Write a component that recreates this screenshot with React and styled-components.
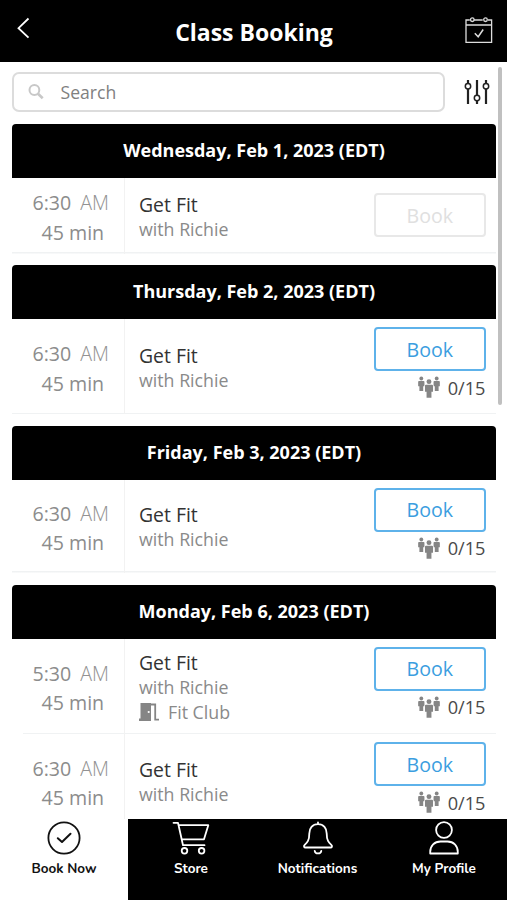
import React from "react";
import styled, { createGlobalStyle } from "styled-components";

const GlobalStyle = createGlobalStyle`
  * {
    box-sizing: border-box;
  }

  body {
    margin: 0;
    background: #fff;
    font-family: "Open Sans", "Noto Sans", sans-serif;
  }

  button {
    font-family: inherit;
  }
`;

const Screen = styled.div`
  position: relative;
  display: flex;
  flex-direction: column;
  height: 900px;
  width: 507px;
  overflow: hidden;
  background: #fff;
`;

const Header = styled.header`
  display: grid;
  grid-template-columns: 60px 1fr 60px;
  align-items: center;
  flex: 0 0 61.5px;
  background: #000;
  color: #fff;
`;

const Title = styled.h1`
  margin: 2px 0 0 1px;
  font-size: 23px;
  line-height: 30px;
  font-weight: 700;
  text-align: center;
`;

const BackIcon = styled.svg`
  margin: -5px 0 0 16px;
  width: 14px;
  height: 22px;
`;

const CalendarIcon = styled.svg`
  width: 28px;
  height: 28px;
  margin: -1px 0 0 18px;
`;

const Toolbar = styled.div`
  display: flex;
  align-items: center;
  flex: 0 0 62px;
  padding: 0 17px 1px 11.5px;
`;

const SearchBox = styled.div`
  display: flex;
  align-items: center;
  width: 433.5px;
  height: 40px;
  padding-left: 13px;
  border: 2px solid #dcdcdc;
  border-radius: 7px;
  color: #808080;
  font-size: 17.6px;
`;

const SearchIcon = styled.svg`
  width: 18px;
  height: 18px;
  margin-right: 16px;
`;

const FilterIcon = styled.svg`
  width: 26px;
  height: 26px;
  margin: -1px 0 0 auto;
`;

const List = styled.main`
  flex: 1 1 0;
  min-height: 0;
  overflow: hidden;
  padding: 0 11px 0 12px;
`;

const DayHeader = styled.h2`
  height: 54px;
  margin: 0;
  border-radius: 4px 4px 0 0;
  background: #000;
  color: #fff;
  font-size: 18px;
  line-height: 53px;
  font-weight: 700;
  text-align: center;
`;

const Day = styled.section`
  height: ${({ $height }) => $height}px;
`;

const Row = styled.div`
  display: grid;
  grid-template-columns: 113px 1fr 122px;
  height: ${({ $height }) => $height || 95}px;
  background: linear-gradient(#f0f2f3, #f0f2f3) no-repeat ${({ $inset }) => ($inset ? 11 : 0)}px 100% / 100% 1.5px;
`;

const Time = styled.div`
  display: flex;
  flex-direction: column;
  justify-content: center;
  padding: 4px 0 0 20.5px;
  border-right: 1px solid #f2f2f2;
  color: #8c8c8c;
  font-size: 19.6px;
  line-height: 29.5px;
  white-space: pre;
`;

const Period = styled.span`
  margin-left: 9px;
  color: #929292;
  font-weight: 300;
`;

const Duration = styled.div`
  padding-left: 9px;
`;

const Info = styled.div`
  display: flex;
  flex-direction: column;
  justify-content: center;
  padding: 2px 0 0 14px;
  color: #8a8a8a;
  font-size: 17.8px;
  line-height: 25px;
`;

const ClassName = styled.div`
  color: #333;
  font-size: 19.4px;
`;

const Place = styled.div`
  display: flex;
  align-items: center;
  gap: 8px;
`;

const DoorIcon = styled.svg`
  width: 21px;
  height: 20px;
`;

const Action = styled.div`
  padding: ${({ $top }) => $top || 8}px 10.5px 0 0;
`;

const BookButton = styled.button`
  display: block;
  width: 111.5px;
  height: 44px;
  padding: 0;
  border: 2px solid ${({ disabled }) => (disabled ? "#e8e8e8" : "#5eb2ea")};
  border-radius: 4px;
  background: #fff;
  color: ${({ disabled }) => (disabled ? "#e0e0e0" : "#3b9ee0")};
  font-size: 19.6px;
`;

const Spots = styled.div`
  display: flex;
  align-items: center;
  justify-content: flex-end;
  gap: 8px;
  margin-top: 3.5px;
  color: #4a4a4a;
  font-size: 18.2px;
  line-height: 26px;
`;

const PeopleIcon = styled.svg`
  width: 22px;
  height: 23px;
`;

const Scrollbar = styled.div`
  position: absolute;
  top: 67px;
  right: 5px;
  width: 4px;
  height: 338px;
  border-radius: 2px;
  background: #c0c0c0;
`;

const TabBar = styled.nav`
  display: grid;
  grid-template-columns: 128px 126px 127px 126px;
  flex: 0 0 81px;
  background: #000;
`;

const Tab = styled.div`
  display: flex;
  flex-direction: column;
  align-items: center;
  padding-top: 1px;
  background: ${({ $active }) => ($active ? "#fff" : "#000")};
  color: ${({ $active }) => ($active ? "#111" : "#fff")};
  font-family: Nunito, Lato, sans-serif;
  font-size: 13.5px;
  line-height: 18px;
  font-weight: 700;
`;

const TabIcon = styled.svg`
  width: 38px;
  height: 36px;
  margin-bottom: 4px;
  fill: none;
  stroke: currentColor;
  stroke-width: 1.8;
  stroke-linecap: round;
  stroke-linejoin: round;
`;

const days = [
  {
    title: "Wednesday, Feb 1, 2023 (EDT)",
    height: 141.5,
    classes: [{ time: "6:30", closed: true, height: 76 }],
  },
  {
    title: "Thursday, Feb 2, 2023 (EDT)",
    height: 160.5,
    classes: [{ time: "6:30" }],
  },
  {
    title: "Friday, Feb 3, 2023 (EDT)",
    height: 159,
    classes: [{ time: "6:30", height: 93 }],
  },
  {
    title: "Monday, Feb 6, 2023 (EDT)",
    height: 250,
    classes: [
      { time: "5:30", place: "Fit Club", inset: true, height: 95.5 },
      { time: "6:30", height: 94 },
    ],
  },
];

const Person = ({ x, y, scale = 1 }) => (
  <g transform={`translate(${x} ${y}) scale(${scale})`}>
    <circle cx="0" cy="2" r="2" />
    <path d="M-2.4 4.5H2.4Q3.3 4.5 3.3 5.4V10.2H2V15.2H-2V10.2H-3.3V5.4Q-3.3 4.5 -2.4 4.5Z" />
  </g>
);

const People = () => (
  <PeopleIcon viewBox="0 0 22 23" fill="#858585">
    <Person x={3.3} y={0.6} scale={0.95} />
    <Person x={18.7} y={0.6} scale={0.95} />
    <g stroke="#fff" strokeWidth="0.6" paintOrder="stroke">
      <Person x={11} y={3.2} scale={1.22} />
    </g>
  </PeopleIcon>
);

const Door = () => (
  <DoorIcon viewBox="0 0 21 20">
    <path d="M1.5 1H12V19H0V16.5H1.5Z" fill="#858585" />
    <circle cx="9.7" cy="10" r="1.1" fill="#fff" />
    <path d="M12 2.5H16.2V17.7H20" fill="none" stroke="#858585" strokeWidth="1.8" />
  </DoorIcon>
);

const ClassRow = ({ time, place, closed, inset, height }) => (
  <Row $height={height} $inset={inset}>
    <Time>
      <div>
        {time}
        <Period>AM</Period>
      </div>
      <Duration>45 min</Duration>
    </Time>
    <Info>
      <ClassName>Get Fit</ClassName>
      <div>with Richie</div>
      {place && (
        <Place>
          <Door />
          {place}
        </Place>
      )}
    </Info>
    <Action $top={closed && 15.5}>
      <BookButton disabled={closed}>Book</BookButton>
      {!closed && (
        <Spots>
          <People />
          0/15
        </Spots>
      )}
    </Action>
  </Row>
);

const App = () => (
  <Screen>
    <GlobalStyle />
    <Header>
      <BackIcon viewBox="0 0 14 22" fill="none" stroke="#fff" strokeWidth="1.8">
        <path d="M12.5 1.5L2.5 11.2L12.5 20.7" />
      </BackIcon>
      <Title>Class Booking</Title>
      <CalendarIcon viewBox="0 0 28 28" fill="none" stroke="#ddd" strokeWidth="1.3">
        <path d="M4.8 4H1V26.3H26.6V4H22.8M9 4H17.7M1 9H26.6" />
        <circle cx="7.3" cy="3.7" r="1.8" />
        <circle cx="20.5" cy="3.7" r="1.8" />
        <path d="M9.8 17.2L13.2 20.7L18.2 13.5" strokeWidth="1.5" />
      </CalendarIcon>
    </Header>
    <Toolbar>
      <SearchBox>
        <SearchIcon viewBox="0 0 18 18" fill="none" stroke="#c8c8c8" strokeWidth="2">
          <circle cx="7.4" cy="7" r="4.9" />
          <path d="M11 10.8L15.7 15.2" strokeWidth="2.7" />
        </SearchIcon>
        Search
      </SearchBox>
      <FilterIcon viewBox="0 0 26 26" fill="none" stroke="#222">
        <path d="M4 1V4.5M4 10V25M13 1V16M13 22V25M22 1V4.5M22 10V25" strokeWidth="2.2" />
        <circle cx="4" cy="7.2" r="2.7" strokeWidth="1.5" />
        <circle cx="13" cy="19" r="2.7" strokeWidth="1.5" />
        <circle cx="22" cy="7.2" r="2.7" strokeWidth="1.5" />
      </FilterIcon>
    </Toolbar>
    <List>
      {days.map(({ title, height, classes }) => (
        <Day key={title} $height={height}>
          <DayHeader>{title}</DayHeader>
          {classes.map((item) => (
            <ClassRow key={item.time} {...item} />
          ))}
        </Day>
      ))}
    </List>
    <Scrollbar />
    <TabBar>
      <Tab $active>
        <TabIcon viewBox="0 0 38 36">
          <circle cx="19" cy="18" r="15.6" />
          <path d="M12.8 18.2L17 22L25.5 13.8" strokeWidth="2" />
        </TabIcon>
        Book Now
      </Tab>
      <Tab>
        <TabIcon viewBox="0 0 38 36">
          <path d="M1.5 2.8H6L11 25.2H32.5M7 5.2H36.3L32 19.3H9.7" />
          <circle cx="12.5" cy="30.8" r="2.8" />
          <circle cx="29.6" cy="30.8" r="2.8" />
        </TabIcon>
        Store
      </Tab>
      <Tab>
        <TabIcon viewBox="0 0 38 36">
          <path d="M19 2.3V4.2M19 4.2C13.3 4.2 10.3 8.3 10.3 13.5C10.3 20.5 8.3 22.5 5.7 24.8C4.4 26 5 27.5 6.5 27.5H31.5C33 27.5 33.6 26 32.3 24.8C29.7 22.5 27.7 20.5 27.7 13.5C27.7 8.3 24.7 4.2 19 4.2Z" />
          <path d="M15.7 30.8C16.2 34.3 21.8 34.3 22.3 30.8" />
        </TabIcon>
        Notifications
      </Tab>
      <Tab>
        <TabIcon viewBox="0 0 38 36">
          <circle cx="19" cy="10" r="7.9" />
          <path d="M5.2 33.5V32C5.2 25.5 9.5 21.5 15.5 21.5H22.5C28.5 21.5 32.8 25.5 32.8 32V33.5Z" />
        </TabIcon>
        My Profile
      </Tab>
    </TabBar>
  </Screen>
);

export default App;
